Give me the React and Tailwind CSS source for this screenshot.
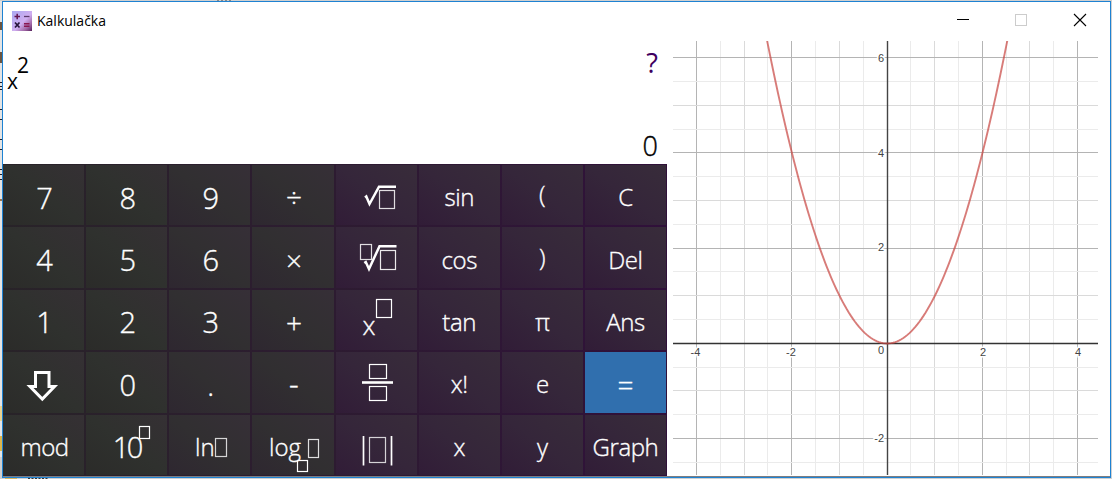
const Box = ({ x, y, w, h, o = 1 }) => (
  <rect x={x + 0.5} y={y + 0.5} width={w - 1} height={h - 1} fill="none" stroke="#fff" strokeWidth="1.2" strokeOpacity={o} />
);

// Every drawn key face uses an 82x62 canvas that covers the whole key.
const Face = ({ children }) => (
  <svg className="absolute inset-0" width="82" height="62" viewBox="0 0 82 62" fill="none" stroke="#fff">
    {children}
  </svg>
);

const Root = () => (
  <Face>
    <path d="M29 32.5L30.3 31.5L33.5 39L43 21.7H60" strokeWidth="2.5" />
    <Box x={43} y={25} w={16} h={19} o={0.85} />
  </Face>
);
const NthRoot = () => (
  <Face>
    <path d="M28.3 36L29.8 35L33 42L43.5 19.2H60.500" strokeWidth="2.5" />
    <Box x={24} y={17} w={12} h={16} o={0.85} />
    <Box x={44} y={23} w={16} h={20} o={0.9} />
  </Face>
);
const Fraction = () => (
  <Face>
    <Box x={33} y={12} w={18} h={15} />
    <path d="M26 30.5H57" strokeWidth="2.6" />
    <Box x={33} y={34} w={18} h={15} />
  </Face>
);
const Abs = () => (
  <Face>
    <path d="M27.5 21V50.5M55.500 21V50.5" strokeWidth="1.7" />
    <Box x={33} y={22} w={17} h={26} o={0.8} />
  </Face>
);
const Arrow = () => (
  <Face>
    <path d="M32.5 20.500H46V34.5H51.5L39.3 47L27 34.5H32.5Z" strokeWidth="3" />
  </Face>
);

const digit = "text-[29px] translate-x-px translate-y-[2px]";
const word = "text-[24px] tracking-[-0.4px] translate-y-[2px]";
const sign = "text-[28px] translate-x-px translate-y-[2px]";

const keys = [
  ["7", digit], ["8", digit], ["9", digit], ["÷", sign],
  [null, null, <Root />], ["sin", word], ["(", "text-[24px] -translate-y-px"], ["C", word],
  ["4", digit], ["5", digit], ["6", digit], ["×", sign],
  [null, null, <NthRoot />], ["cos", word], [")", "text-[24px] -translate-y-px"], ["Del", word],
  ["1", digit], ["2", digit], ["3", digit], ["+", sign],
  ["x", "text-[26px] -translate-x-[7px] translate-y-[5px]", <Face><Box x={40} y={9} w={16} h={19} /></Face>],
  ["tan", word], ["π", word], ["Ans", word],
  [null, null, <Arrow />], ["0", digit], [".", digit], ["-", "text-[30px] translate-x-px translate-y-[2px]"],
  [null, null, <Fraction />], ["x!", word], ["e", word], ["=", "text-[28px] translate-y-[3px]"],
  ["mod", "text-[24px] tracking-[-0.4px] translate-x-px translate-y-[2px]"],
  ["10", "text-[29px] tracking-[-2.6px] translate-y-[2px]", <Face><Box x={53} y={11} w={11} h={13} /></Face>],
  ["ln", "text-[24px] -translate-x-[5px] translate-y-[2px]", <Face><Box x={46} y={23} w={12} h={19} o={0.8} /></Face>],
  ["log", "text-[24px] -translate-x-[8px] translate-y-[2px]", <Face><Box x={56} y={24} w={11} h={19} o={0.85} /><Box x={45} y={45} w={11} h={12} /></Face>],
  [null, null, <Abs />], ["x", word], ["y", word], ["Graph", word],
];

const OX = 214;
const OY = 302;
const U = 47.62;
const tone = (n) => (n % 4 === 0 ? "#b4b4b4" : n % 2 === 0 ? "#dadada" : "#ebebeb");
const cols = [-8, -7, -6, -5, -4, -3, -2, -1, 1, 2, 3, 4, 5, 6, 7, 8];
const rows = [-5, -4, -3, -2, -1, 1, 2, 3, 4, 5, 6, 7, 8, 9, 10, 11, 12];
const snap = (v) => Math.floor(v) + 0.5;
const curve = Array.from({ length: 121 }, (_, i) => {
  const u = -2.55 + (i * 5.1) / 120;
  return `${i ? "L" : "M"}${(OX + 0.2 + u * U).toFixed(2)} ${(OY + 0.5 - u * u * U).toFixed(2)}`;
}).join("");

const Label = ({ x, y, children, anchor = "middle" }) => (
  <text x={x} y={y} textAnchor={anchor} fill="#444" stroke="#fff" strokeWidth="3" paintOrder="stroke" className="font-['Liberation_Sans',sans-serif] text-[11px]">
    {children}
  </text>
);

const Graph = () => (
  <svg width="425" height="434" viewBox="0 0 425 434" className="block">
    {cols.map((n) => <path key={n} d={`M${snap(OX + (n * U) / 2)} 0V434`} stroke={tone(n)} />)}
    {rows.map((n) => <path key={n} d={`M0 ${snap(OY + 0.3 - (n * U) / 2)}H425`} stroke={tone(n)} />)}
    <path d="M0 302.5H425" stroke="#333" strokeWidth="1.5" />
    <path d="M214.5 0V434" stroke="#444" strokeWidth="1.4" />
    <Label x={22.5} y={315}>-4</Label>
    <Label x={118} y={315}>-2</Label>
    <Label x={211} y={313} anchor="end">0</Label>
    <Label x={310} y={315}>2</Label>
    <Label x={405} y={315}>4</Label>
    <Label x={211} y={21} anchor="end">6</Label>
    <Label x={211} y={116} anchor="end">4</Label>
    <Label x={211} y={210} anchor="end">2</Label>
    <Label x={211} y={401} anchor="end">-2</Label>
    <path d={curve} fill="none" stroke="#c74440" strokeOpacity="0.7" strokeWidth="1.9" />
  </svg>
);

const AppIcon = () => (
  <svg width="20" height="20" viewBox="0 0 20 20">
    <defs>
      <linearGradient id="tile" x1="0" y1="0" x2="1" y2="1">
        <stop offset="0" stopColor="#aaa9f2" />
        <stop offset="0.55" stopColor="#cfaef0" />
        <stop offset="0.8" stopColor="#a066a4" />
        <stop offset="1" stopColor="#55205c" />
      </linearGradient>
    </defs>
    <rect width="20" height="20" fill="url(#tile)" />
    <path d="M2.5 5.5H8M5.2 2.8V8.2" stroke="#63154f" strokeWidth="1.5" />
    <path d="M12 5.5H17.5" stroke="#5b3a6b" strokeWidth="1.3" />
    <path d="M3 11.5L7.5 16.5M7.5 11.5L3 16.5" stroke="#26153a" strokeWidth="1.7" />
    <path d="M12 12.8H17.5M12 15.3H17.5" stroke="#8a1750" strokeWidth="1.5" />
  </svg>
);

// Slivers of the desktop that stay visible around the window.
const Desktop = () => (
  <svg className="absolute inset-0" width="1112" height="479" viewBox="0 0 1112 479">
    <rect width="1112" height="479" fill="#d0d0d0" />
    <rect y="1" width="2" height="456" fill="#e4e4e4" />
    <path d="M1 22V30M1 52V63" stroke="#6b5540" strokeWidth="2" />
    <path d="M0 82.500H2M0 86.500H2M0 89.500H2M0 109.5H2M0 119.500H2M0 139.500H2M0 149.500H2M0 169.500H2M0 174.500H2M0 179.500H2" stroke="#1c1c28" />
    <rect y="199" width="2" height="2" fill="#9a7350" />
    <rect y="406" width="2" height="15" fill="#e9d391" />
    <rect y="436" width="2" height="15" fill="#dcb54c" />
    <rect x="5" y="478" width="12" height="1" fill="#d8b45a" />
    <path d="M28 478.500H48" stroke="#333" strokeDasharray="2 1.500" />
    <path d="M217 0.500H232" stroke="#888" strokeDasharray="2 2" />
  </svg>
);

export default function App() {
  return (
    <div className="relative flex h-[479px] w-[1112px] flex-col overflow-hidden pt-px pr-px pl-[2px] font-['Open_Sans','Noto_Sans',sans-serif]">
      <Desktop />
      <div className="relative flex h-[477px] flex-col border border-[#1e82d2] bg-white">
        <header className="flex h-[38px] shrink-0 items-center pl-[9px]">
          <AppIcon />
          <span className="ml-[5px] pb-[2px] text-[14px] text-black">Kalkulačka</span>
          <svg className="ml-auto" width="160" height="38" viewBox="0 0 160 38" fill="none" stroke="#000">
            <path d="M7 17.5H19" />
            <rect x="65.500" y="12.500" width="11" height="11" stroke="#ccc" />
            <path d="M124 12L136 24M136 12L124 24" strokeWidth="1.1" />
          </svg>
        </header>
        <div className="flex min-h-0 flex-1 border-b border-[#7d7d80]">
          <div className="flex w-[664px] flex-col">
            <div className="flex h-[124px] shrink-0 justify-between pr-[9px] pl-[4px]">
              <div className="flex text-[21px] leading-[24px] text-black">
                <span className="pt-[29px]">x</span>
                <span className="-ml-px pt-[13px]">2</span>
              </div>
              <div className="flex flex-col items-end text-[27px] leading-[34px]">
                <span className="mt-[6px] text-[#400060]">?</span>
                <span className="mt-[49px] font-light text-black [-webkit-text-stroke:0.4px_#000]">0</span>
              </div>
            </div>
            <div className="grid h-[312px] grid-cols-8 grid-rows-5 gap-[2px] bg-linear-to-r from-[#282328] via-[#2d1b31] to-[#30103a] p-px pl-0">
              {keys.map(([text, cls, face], i) => (
                <button
                  key={i}
                  className={`relative flex items-center justify-center leading-none font-light text-white [-webkit-text-stroke:0.35px_#fff] ${
                    text === "=" ? "bg-[#306fae]" : i % 8 < 2 ? "bg-linear-to-tr from-[#2b2b29] via-[#2f312e] to-[#353034]" : i % 8 < 4 ? "bg-linear-to-tr from-[#2e2730] via-[#312f31] to-[#362f37]" : "bg-linear-to-tr from-[#311c37] via-[#35263a] to-[#382c3a]"
                  }`}
                >
                  {text && <span className={cls}>{text}</span>}
                  {face}
                </button>
              ))}
            </div>
          </div>
          <div className="pt-px pl-[6px]">
            <Graph />
          </div>
        </div>
      </div>
    </div>
  );
}
